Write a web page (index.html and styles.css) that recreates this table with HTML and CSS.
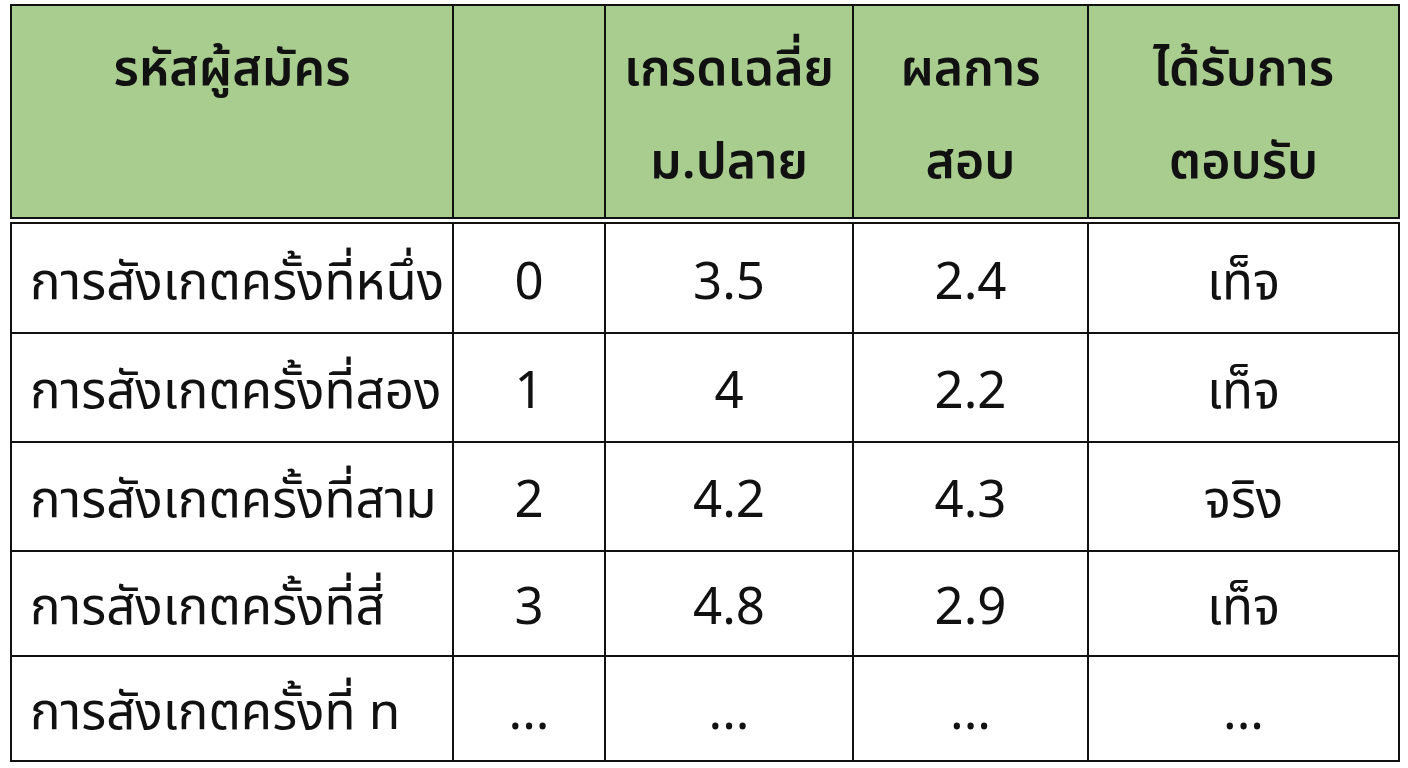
FILE: index.html
```html
<!DOCTYPE html>
<html lang="th">
<head>
<meta charset="utf-8">
<link rel="stylesheet" href="styles.css">
</head>
<body>
<div class="sheet">
  <table class="grid head">
    <colgroup>
      <col class="c1"><col class="c2"><col class="c3"><col class="c4"><col class="c5">
    </colgroup>
    <tr>
      <th>รหัสผู้สมัคร</th>
      <th></th>
      <th>เกรดเฉลี่ย<br>ม.ปลาย</th>
      <th>ผลการ<br>สอบ</th>
      <th>ได้รับการ<br>ตอบรับ</th>
    </tr>
  </table>
  <table class="grid body">
    <colgroup>
      <col class="c1"><col class="c2"><col class="c3"><col class="c4"><col class="c5">
    </colgroup>
    <tr class="r0"><td class="name">การสังเกตครั้งที่หนึ่ง</td><td>0</td><td>3.5</td><td>2.4</td><td>เท็จ</td></tr>
    <tr class="r1"><td class="name">การสังเกตครั้งที่สอง</td><td>1</td><td>4</td><td>2.2</td><td>เท็จ</td></tr>
    <tr class="r1"><td class="name">การสังเกตครั้งที่สาม</td><td>2</td><td>4.2</td><td>4.3</td><td>จริง</td></tr>
    <tr class="r2"><td class="name">การสังเกตครั้งที่สี่</td><td>3</td><td>4.8</td><td>2.9</td><td>เท็จ</td></tr>
    <tr class="r2"><td class="name">การสังเกตครั้งที่ n</td><td>...</td><td>...</td><td>...</td><td>...</td></tr>
  </table>
</div>
</body>
</html>
```
FILE: styles.css
```css
html, body {
  margin: 0;
  padding: 0;
  background: #ffffff;
}
.sheet {
  padding: 4px 10px 0 10px;
  display: flex;
  flex-direction: column;
  gap: 3px;
  font-family: "Noto Sans Thai", "Noto Sans Thai UI", "Noto Sans", "DejaVu Sans", sans-serif;
  color: #111;
}
.grid {
  width: 1388px;
  border-collapse: collapse;
  table-layout: fixed;
  border: 2px solid #111;
}
.grid td, .grid th {
  border: 2px solid #111;
  padding: 0;
}
.c1 { width: 442px; }
.c2 { width: 152px; }
.c3 { width: 248px; }
.c4 { width: 235px; }
.c5 { width: 311px; }
.head th {
  background: #a9cd8f;
  height: 213px;
  vertical-align: top;
  font-size: 50px;
  font-weight: 600;
  line-height: 93px;
  padding-top: 18px;
  box-sizing: border-box;
  text-align: center;
}
.body td {
  font-size: 51px;
  text-align: center;
  vertical-align: middle;
  padding-top: 10px;
  box-sizing: border-box;
}
.body td.name {
  text-align: left;
  padding-left: 18px;
}
.r0 td { height: 110px; }
.r1 td { height: 109px; }
.r2 td { height: 105px; }
```
